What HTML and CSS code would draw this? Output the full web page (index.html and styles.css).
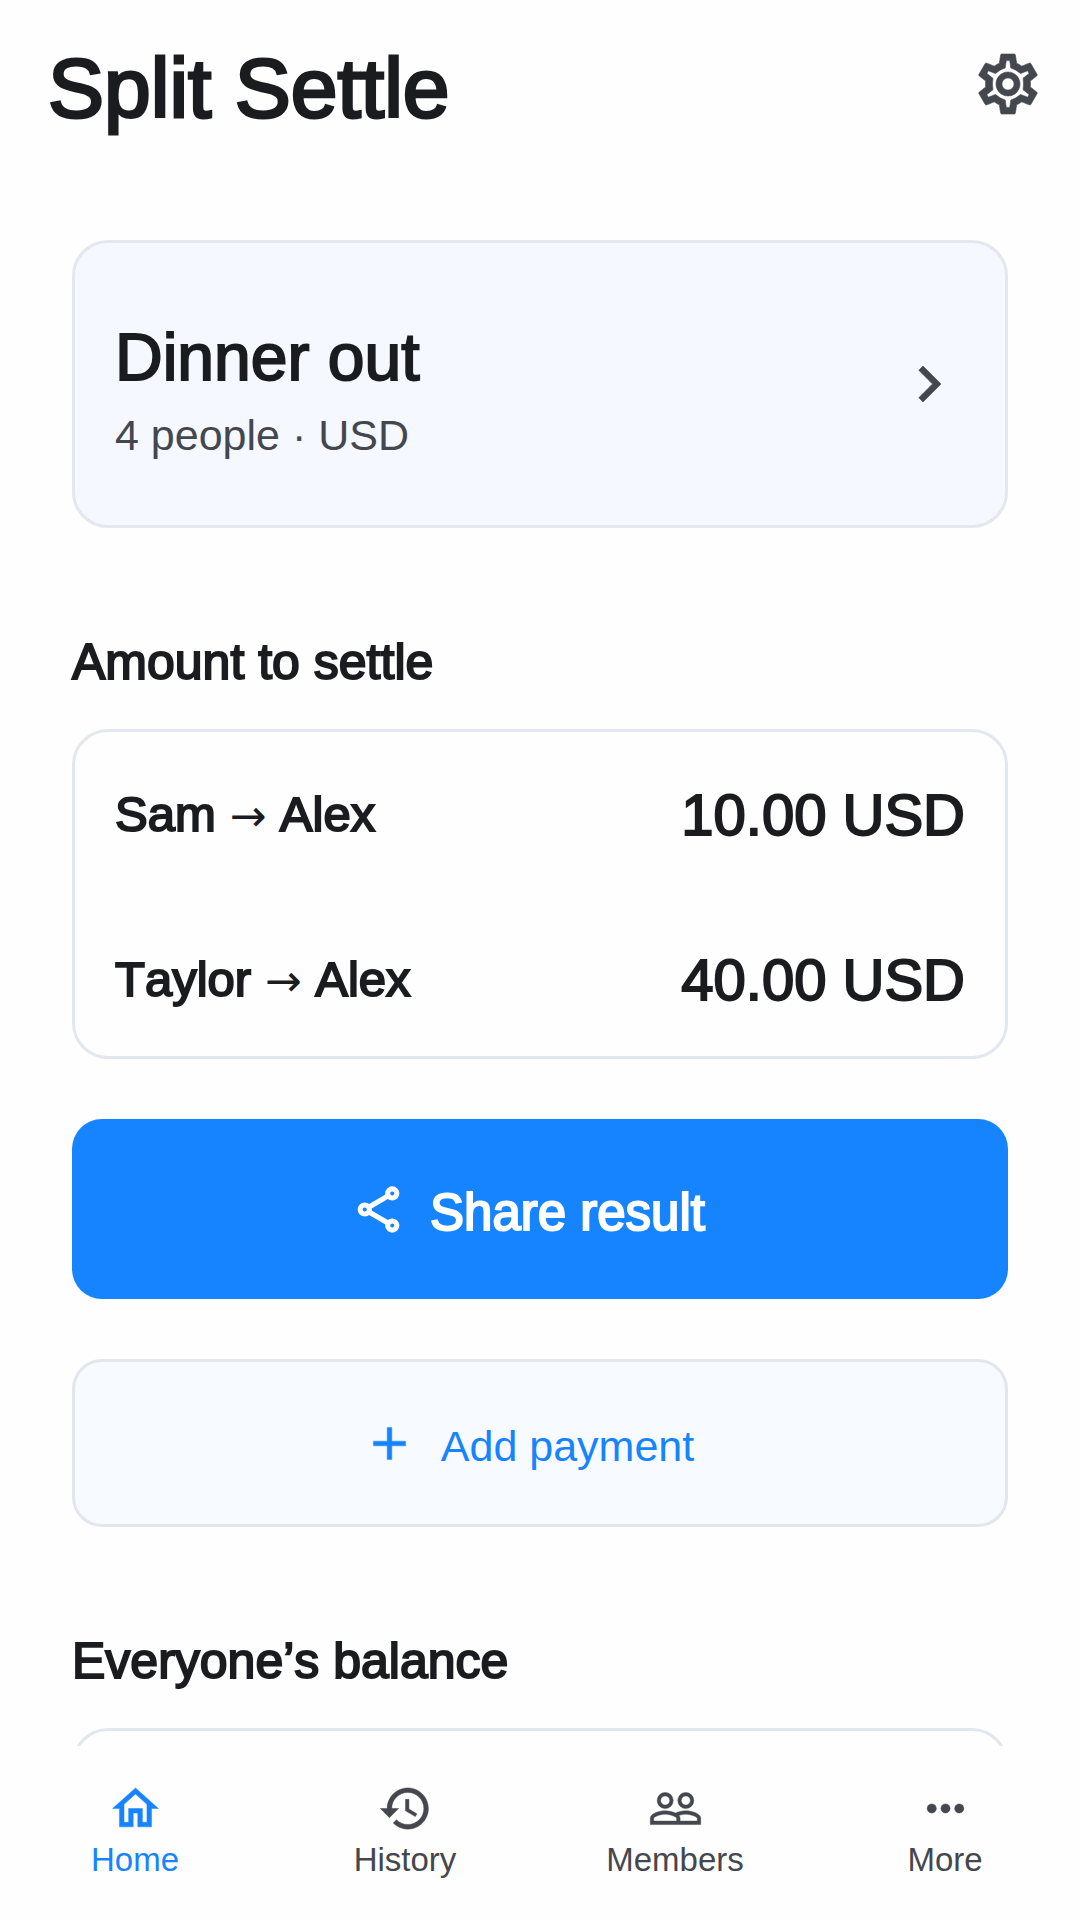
FILE: index.html
```html
<!DOCTYPE html>
<html lang="en">
<head>
    <meta charset="UTF-8">
    <meta name="viewport" content="width=device-width, initial-scale=1">
    <title>Split Settle</title>
    <link rel="stylesheet" href="styles.css">
</head>
<body>
<header class="top-bar">
    <h1 class="title">Split Settle</h1>
    <button class="icon-btn" type="button" aria-label="Settings">
        <svg class="icon-lg" viewBox="0 0 24 24"><path fill-rule="evenodd" d="M19.43 12.98c.04-.32.07-.64.07-.98 0-.34-.03-.66-.07-.98l2.11-1.65c.19-.15.24-.42.12-.64l-2-3.46c-.09-.16-.26-.25-.44-.25-.06 0-.12.01-.17.03l-2.49 1c-.52-.4-1.08-.73-1.69-.98l-.38-2.65C14.46 2.18 14.25 2 14 2h-4c-.25 0-.46.18-.49.42l-.38 2.65c-.61.25-1.17.59-1.69.98l-2.49-1c-.06-.02-.12-.03-.18-.03-.17 0-.34.09-.43.25l-2 3.46c-.13.22-.07.49.12.64l2.11 1.65c-.04.32-.07.65-.07.98 0 .33.03.66.07.98l-2.11 1.65c-.19.15-.24.42-.12.64l2 3.46c.09.16.26.25.44.25.06 0 .12-.01.17-.03l2.49-1c.52.4 1.08.73 1.69.98l.38 2.65c.03.24.24.42.49.42h4c.25 0 .46-.18.49-.42l.38-2.65c.61-.25 1.17-.59 1.69-.98l2.49 1c.06.02.12.03.18.03.17 0 .34-.09.43-.25l2-3.46c.12-.22.07-.49-.12-.64l-2.11-1.65zm-2.3-1.71c.04.31.05.52.05.73 0 .21-.02.43-.05.73l-.1 1.2.95.75 1.08.84-.5.9-1.27-.51-1.14-.42-.9.68c-.43.32-.84.56-1.25.73l-1.06.43-.16 1.13-.2 1.35h-1.16l-.19-1.35-.16-1.13-1.06-.43c-.43-.18-.83-.41-1.23-.71l-.91-.7-1.16.43-1.27.51-.5-.9 1.08-.84.95-.75-.1-1.2c-.03-.31-.05-.54-.05-.74s.02-.43.05-.73l.1-1.2-.95-.75-1.08-.84.5-.9 1.27.51 1.14.42.9-.68c.43-.32.84-.56 1.25-.73l1.06-.43.16-1.13.2-1.35h1.16l.19 1.35.16 1.13 1.06.43c.43.18.83.41 1.23.71l.91.7 1.16-.43 1.27-.51.5.9-1.08.84-.95.75.1 1.2zM12 8c-2.21 0-4 1.79-4 4s1.79 4 4 4 4-1.79 4-4-1.79-4-4-4zm0 6c-1.1 0-2-.9-2-2s.9-2 2-2 2 .9 2 2-.9 2-2 2z"/></svg>
    </button>
</header>

<main class="content">
    <a class="card group" href="#group">
        <span class="group-info">
            <strong class="group-name">Dinner out</strong>
            <span class="group-meta">4 people · USD</span>
        </span>
        <svg class="icon-lg" viewBox="0 0 24 24"><path d="M10 6L8.59 7.41 13.17 12l-4.58 4.59L10 18l6-6z"/></svg>
    </a>

    <h2 class="section-title">Amount to settle</h2>
    <ul class="card settle-list">
        <li class="settle-row">
            <span class="who">Sam <span class="arrow">→</span> Alex</span>
            <span class="amount">10.00 USD</span>
        </li>
        <li class="settle-row">
            <span class="who">Taylor <span class="arrow">→</span> Alex</span>
            <span class="amount">40.00 USD</span>
        </li>
    </ul>

    <button class="btn btn-primary" type="button">
        <svg class="icon icon-outline" viewBox="0 0 24 24">
            <path d="M16.3 6L7.7 11M7.7 13l8.6 5"/>
            <circle cx="18" cy="5" r="2"/>
            <circle cx="6" cy="12" r="2"/>
            <circle cx="18" cy="19" r="2"/>
        </svg>
        <span class="btn-label">Share result</span>
    </button>
    <button class="btn btn-secondary" type="button">
        <svg class="icon" viewBox="0 0 24 24"><path d="M19 13h-6v6h-2v-6H5v-2h6V5h2v6h6z"/></svg>
        <span class="btn-label">Add payment</span>
    </button>

    <h2 class="section-title">Everyone’s balance</h2>
    <div class="card balance"></div>
</main>

<nav class="tab-bar">
    <a class="tab active" href="#home">
        <svg class="icon" viewBox="0 0 24 24"><path d="M12 5.69l5 4.5V18h-2v-6H9v6H7v-7.81l5-4.5M12 3L2 12h3v8h6v-6h2v6h6v-8h3L12 3z"/></svg>
        Home
    </a>
    <a class="tab" href="#history">
        <svg class="icon" viewBox="0 0 24 24"><path d="M13 3c-4.97 0-9 4.03-9 9H1l3.89 3.89.07.14L9 12H6c0-3.87 3.13-7 7-7s7 3.13 7 7-3.13 7-7 7c-1.93 0-3.68-.79-4.94-2.06l-1.42 1.42C8.27 19.99 10.51 21 13 21c4.97 0 9-4.03 9-9s-4.03-9-9-9zm-1 5v5l4.28 2.54.72-1.21-3.5-2.08V8H12z"/></svg>
        History
    </a>
    <a class="tab" href="#members">
        <svg class="icon" viewBox="0 0 24 24"><path fill-rule="evenodd" d="M16.5 13c-1.2 0-3.07.34-4.5 1-1.43-.67-3.3-1-4.5-1C5.33 13 1 14.08 1 16.25V19h22v-2.75c0-2.17-4.33-3.25-6.5-3.25zm-4 4.5h-10v-1.25c0-.54 2.56-1.75 5-1.75s5 1.21 5 1.75v1.25zm9 0H14v-1.25c0-.46-.2-.86-.52-1.22.88-.3 1.96-.53 3.02-.53 2.44 0 5 1.21 5 1.75v1.25zM7.5 12a3.5 3.5 0 1 0 0-7 3.5 3.5 0 0 0 0 7zm0-5.5a2 2 0 1 1 0 4 2 2 0 0 1 0-4zM16.5 12a3.5 3.5 0 1 0 0-7 3.5 3.5 0 0 0 0 7zm0-5.5a2 2 0 1 1 0 4 2 2 0 0 1 0-4z"/></svg>
        Members
    </a>
    <a class="tab" href="#more">
        <svg class="icon" viewBox="0 0 24 24"><circle cx="6" cy="12" r="2"/><circle cx="12" cy="12" r="2"/><circle cx="18" cy="12" r="2"/></svg>
        More
    </a>
</nav>
</body>
</html>
```
FILE: styles.css
```css
* {
    box-sizing: border-box;
}

body {
    display: flex;
    flex-direction: column;
    height: 100vh;
    margin: 0;
    background: #fefefe;
    color: #1a1c20;
    font-family: "Liberation Sans", Arial, sans-serif;
    font-kerning: none;
}

a {
    color: inherit;
    text-decoration: none;
}

button {
    font-family: inherit;
    cursor: pointer;
}

svg {
    display: block;
    flex-shrink: 0;
    fill: currentColor;
    stroke: currentColor;
    stroke-width: 0.2;
}

.icon {
    width: 55px;
    height: 55px;
}

.icon-lg {
    width: 72px;
    height: 72px;
    color: #44474e;
}

.icon-outline {
    fill: none;
    stroke-width: 2.2;
}

/* header */
.top-bar {
    display: flex;
    align-items: center;
    justify-content: space-between;
    padding: 32px 36px 32px 48px;
}

.title {
    margin: 0;
    padding-top: 8px;
    font-size: 84px;
    font-weight: normal;
    line-height: 96px;
    -webkit-text-stroke: 3px;
}

.icon-btn {
    padding: 0;
    border: none;
    background: none;
}

/* scrolling part */
.content {
    flex: 1;
    min-height: 0;
    padding: 72px 72px 0;
    overflow-y: auto;
    scrollbar-width: none;
}

.card {
    border: 3px solid #e3e7ef;
    border-radius: 36px;
}

.group {
    display: flex;
    align-items: center;
    justify-content: space-between;
    padding: 64px 40px;
    background: #f5f8ff;
}

.group-info {
    display: flex;
    flex-direction: column;
    padding-top: 2px;
    gap: 4px;
}

.group-name {
    font-size: 66px;
    font-weight: normal;
    line-height: 96px;
    -webkit-text-stroke: 2px;
}

.group-meta {
    color: #44474e;
    font-size: 43px;
    line-height: 52px;
}

.section-title {
    margin: 104px 0 37px;
    font-size: 50px;
    font-weight: normal;
    line-height: 60px;
    -webkit-text-stroke: 2px;
}

.settle-list {
    display: flex;
    flex-direction: column;
    gap: 96px;
    margin: 0 0 60px;
    padding: 48px 40px 42px;
    list-style: none;
}

.settle-row {
    display: flex;
    justify-content: space-between;
    line-height: 69px;
    -webkit-text-stroke: 2px;
}

.who {
    font-size: 49px;
}

.arrow {
    font-family: "DejaVu Sans", sans-serif;
    font-size: 44px;
    line-height: 1;
    -webkit-text-stroke: 0;
}

.amount {
    font-size: 58px;
}

.btn {
    display: flex;
    align-items: center;
    justify-content: center;
    gap: 24px;
    width: 100%;
    padding: 0 24px 0 0;
    border: none;
    border-radius: 30px;
}

.btn-label {
    padding-top: 6px;
}

.btn-primary {
    height: 180px;
    margin-bottom: 60px;
    background: #1784ff;
    color: #fff;
    font-size: 51px;
}

.btn-primary .btn-label {
    -webkit-text-stroke: 2px;
}

.btn-secondary {
    height: 168px;
    border: 3px solid #e3e7ed;
    background: #f7faff;
    color: #1784ff;
    font-size: 43px;
}

.balance {
    height: 330px;
}

/* bottom tabs */
.tab-bar {
    display: flex;
    padding: 35px 0 40px;
}

.tab {
    display: flex;
    flex: 1;
    flex-direction: column;
    align-items: center;
    gap: 4px;
    color: #44474e;
    font-size: 33px;
    line-height: 40px;
}

.tab.active {
    color: #1784ff;
}
```
